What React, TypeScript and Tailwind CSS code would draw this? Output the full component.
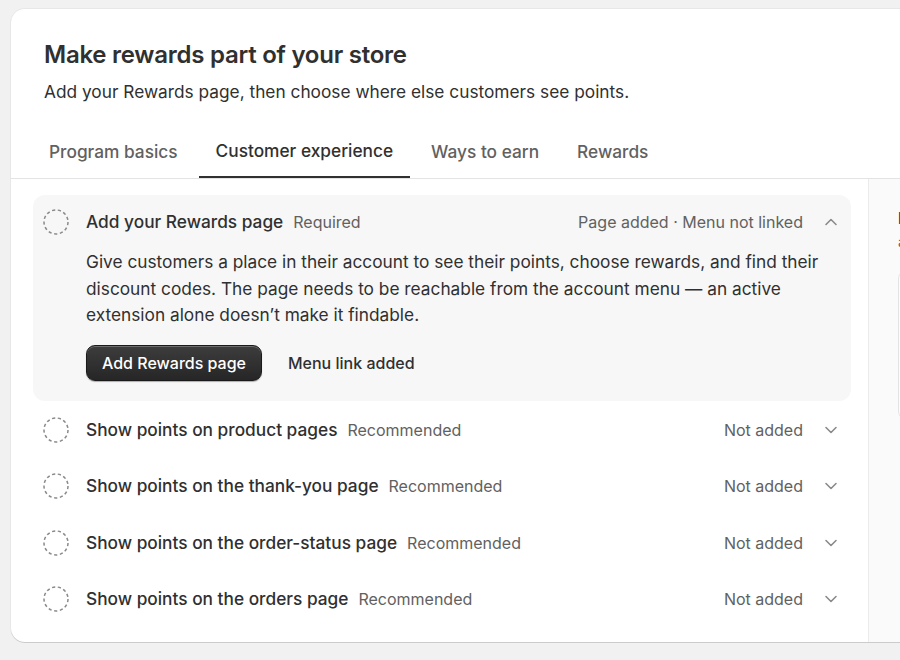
import React from "react";

const Circle = () => (
  <svg width="26" height="26" viewBox="0 0 26 26" className="shrink-0">
    <circle cx="13" cy="13" r="12" fill="none" stroke="#8a8a8a" strokeWidth="1.5" strokeDasharray="3.2 2.6" />
  </svg>
);

const Chevron = ({ up = false }: { up?: boolean }) => (
  <svg width="16" height="16" viewBox="0 0 16 16" className="shrink-0">
    <path
      d={up ? "M3 10.5 L8 5.5 L13 10.5" : "M3 5.5 L8 10.5 L13 5.5"}
      fill="none"
      stroke="#8a8a8a"
      strokeWidth="1.6"
      strokeLinecap="round"
      strokeLinejoin="round"
    />
  </svg>
);

const rows = [
  "Show points on product pages",
  "Show points on the thank-you page",
  "Show points on the order-status page",
  "Show points on the orders page",
];

export default function App() {
  return (
    <div
      className="w-[900px] h-[660px] overflow-hidden bg-[#f1f1f1] pl-[11px] pt-[9px]"
      style={{ fontFamily: "Inter, 'Noto Sans', sans-serif" }}
    >
      <div className="w-[940px] h-[633px] bg-white rounded-[14px] shadow-[0_1px_0_rgba(0,0,0,0.12),0_0_0_1px_rgba(0,0,0,0.04)] overflow-hidden flex flex-col">
        <div className="pl-[33px] pt-[31px]">
          <h1 className="text-[24px] leading-[30px] font-semibold text-[#303030] tracking-[-0.25px]">
            Make rewards part of your store
          </h1>
          <p className="mt-[10px] text-[17.3px] leading-[24px] text-[#303030]">
            Add your Rewards page, then choose where else customers see points.
          </p>
        </div>
        <div className="mt-[22px] flex gap-[4px] pl-[21px] border-b border-[#e3e3e3]">
          {["Program basics", "Customer experience", "Ways to earn", "Rewards"].map((t, i) => (
            <div
              key={t}
              className={
                i === 1
                  ? "px-[17px] h-[52px] flex items-center text-[17.3px] font-medium text-[#303030] border-b-2 border-[#303030] -mb-px"
                  : "px-[17px] h-[52px] flex items-center text-[17.3px] font-medium text-[#616161]"
              }
            >
              {t}
            </div>
          ))}
        </div>
        <div className="flex flex-1">
          <div className="w-[857px] shrink-0 pl-[22px] pr-[17px] pt-[16px]">
            <div className="bg-[#f7f7f7] rounded-[12px] pl-[10px] pr-[12px] pt-[14px] pb-[20px]">
              <div className="flex items-center h-[26px]">
                <Circle />
                <span className="ml-[17px] text-[17.3px] font-medium text-[#303030]">Add your Rewards page</span>
                <span className="ml-[10px] text-[16px] text-[#616161]">Required</span>
                <span className="ml-auto text-[16px] text-[#616161]">Page added · Menu not linked</span>
                <span className="ml-[20px]">
                  <Chevron up />
                </span>
              </div>
              <p className="ml-[43px] mt-[14px] pr-[10px] text-[17.3px] leading-[26.5px] text-[#303030]">
                Give customers a place in their account to see their points, choose rewards, and find their
                discount codes. The page needs to be reachable from the account menu — an active extension alone
                doesn’t make it findable.
              </p>
              <div className="ml-[43px] mt-[16px] flex items-center gap-[26px]">
                <button className="h-[36px] px-[15px] rounded-[9px] text-white text-[16px] font-medium bg-gradient-to-b from-[#3d3d3d] to-[#262626] border border-[#1a1a1a] shadow-[inset_0_1px_0_rgba(255,255,255,0.25),0_1px_1px_rgba(0,0,0,0.3)]">
                  Add Rewards page
                </button>
                <span className="text-[16px] font-medium text-[#303030]">Menu link added</span>
              </div>
            </div>
            <div className="mt-[1px]">
              {rows.map((r) => (
                <div key={r} className="flex items-center h-[56.5px] pl-[10px] pr-[12px]">
                  <Circle />
                  <span className="ml-[17px] text-[17.3px] font-medium text-[#303030]">{r}</span>
                  <span className="ml-[10px] text-[16px] text-[#616161]">Recommended</span>
                  <span className="ml-auto text-[16px] text-[#616161]">Not added</span>
                  <span className="ml-[20px]">
                    <Chevron />
                  </span>
                </div>
              ))}
            </div>
          </div>
          <div className="flex-1 bg-[#fafafa] border-l border-[#ebebeb] pl-[29px] pt-[26px]">
            <div className="text-[16px] font-semibold text-[#303030] leading-[26px] whitespace-nowrap">Preview</div>
            <div className="text-[14px] text-[#616161] leading-[22px] whitespace-nowrap">as customers see it</div>
            <div className="mt-[16px] h-[152px] w-[300px] bg-white border border-[#e3e3e3] rounded-[10px]" />
          </div>
        </div>
      </div>
    </div>
  );
}
